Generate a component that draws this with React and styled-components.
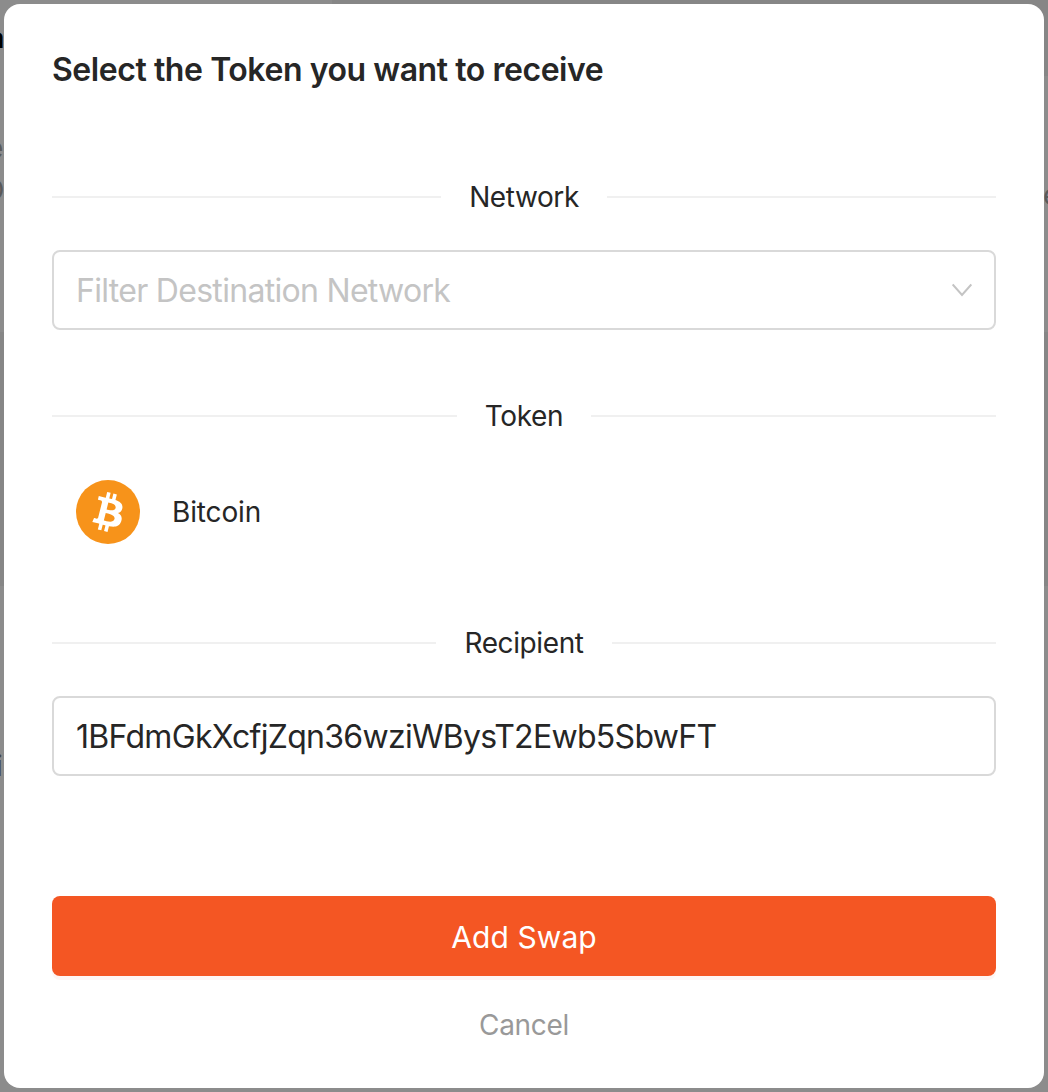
import React from "react";
import styled, { createGlobalStyle } from "styled-components";

const GlobalStyle = createGlobalStyle`
  html, body {
    margin: 0;
    padding: 0;
    background: #8c8c8c;
  }
  * {
    box-sizing: border-box;
  }
`;

const SwapModal = () => {
  return (
    <Backdrop>
      <GlobalStyle />
      <PagePanel $left={332} $top={0} $width={716} $height={76} />
      <PagePanel $left={0} $top={332} $width={1048} $height={254} />
      <PeekText $left={-12} $top={21} $color="#000" $weight={700}>a</PeekText>
      <PeekText $left={-13} $top={131} $color="#5a5a5a">e</PeekText>
      <PeekText $left={-17} $top={173} $color="#5a5a5a">O</PeekText>
      <PeekText $left={1043} $top={178} $color="#5a5a5a">e</PeekText>
      <PeekText $left={-4} $top={749} $color="#444">i</PeekText>
      <Modal>
        <Title>Select the Token you want to receive</Title>

        <Divider>Network</Divider>
        <Field>
          <Placeholder>Filter Destination Network</Placeholder>
          <svg width="20" height="14" viewBox="0 0 20 14" fill="none">
            <path d="M0.7 1.5 L10 12 L19.3 1.5" stroke="#c4c4c4" strokeWidth="2" />
          </svg>
        </Field>

        <Divider $top={66}>Token</Divider>
        <TokenRow>
          <svg width="64" height="64" viewBox="0 0 32 32">
            <circle cx="16" cy="16" r="16" fill="#f7931a" />
            <path
              fill="#fff"
              d="M23.189 14.02c.314-2.096-1.283-3.223-3.465-3.975l.708-2.84-1.728-.43-.69 2.765c-.454-.114-.92-.22-1.385-.326l.695-2.783L15.596 6l-.708 2.839c-.376-.086-.746-.17-1.104-.26l.002-.009-2.384-.595-.46 1.846s1.283.294 1.256.312c.7.175.826.638.805 1.006l-.806 3.235c.048.012.11.03.18.057l-.183-.045-1.13 4.532c-.086.212-.303.531-.793.41.018.025-1.256-.313-1.256-.313l-.858 1.978 2.25.561c.418.105.828.215 1.231.318l-.715 2.872 1.727.43.708-2.84c.472.127.93.245 1.378.357l-.706 2.828 1.728.43.715-2.866c2.948.558 5.164.333 6.097-2.333.752-2.146-.037-3.385-1.588-4.192 1.13-.26 1.98-1.003 2.207-2.538zm-3.95 5.538c-.533 2.147-4.148.986-5.32.695l.95-3.805c1.172.293 4.929.872 4.37 3.11zm.535-5.569c-.487 1.953-3.495.96-4.47.717l.86-3.45c.975.243 4.118.696 3.61 2.733z"
            />
          </svg>
          <TokenName>Bitcoin</TokenName>
        </TokenRow>

        <Divider $top={79}>Recipient</Divider>
        <Field>
          <Value>1BFdmGkXcfjZqn36wziWBysT2Ewb5SbwFT</Value>
        </Field>

        <PrimaryButton>Add Swap</PrimaryButton>
        <CancelButton>Cancel</CancelButton>
      </Modal>
    </Backdrop>
  );
};

export default SwapModal;

const Backdrop = styled.div`
  position: relative;
  width: 1048px;
  height: 1092px;
  padding: 4px;
  overflow: hidden;
  background: #8c8c8c;
  font-family: Inter, "Liberation Sans", sans-serif;
`;

const PagePanel = styled.div`
  position: absolute;
  left: ${({ $left }) => $left}px;
  top: ${({ $top }) => $top}px;
  width: ${({ $width }) => $width}px;
  height: ${({ $height }) => $height}px;
  background: #868686;
`;

const PeekText = styled.span`
  position: absolute;
  left: ${({ $left }) => $left}px;
  top: ${({ $top }) => $top}px;
  font-size: 28px;
  line-height: 34px;
  font-weight: ${({ $weight }) => $weight || 400};
  color: ${({ $color }) => $color};
`;

const Modal = styled.div`
  position: relative;
  width: 1040px;
  height: 1084px;
  padding: 45px 48px 0;
  display: flex;
  flex-direction: column;
  background: #fff;
  border-radius: 16px;
`;

const Title = styled.h2`
  margin: 0;
  height: 42px;
  font-size: 32px;
  line-height: 42px;
  font-weight: 600;
  letter-spacing: -0.44px;
  color: #262626;
`;

const Divider = styled.div`
  margin-top: ${({ $top }) => $top || 86}px;
  display: flex;
  align-items: center;
  gap: 28px;
  height: 40px;
  font-size: 28px;
  line-height: 40px;
  letter-spacing: -0.4px;
  color: #262626;
  white-space: nowrap;

  &::before,
  &::after {
    content: "";
    flex: 1;
    height: 2px;
    background: #f0f0f0;
  }
`;

const Field = styled.div`
  margin-top: 33px;
  height: 80px;
  padding: 0 22px;
  display: flex;
  align-items: center;
  justify-content: space-between;
  border: 2px solid #d9d9d9;
  border-radius: 8px;
  font-size: 32px;
  letter-spacing: -0.7px;
`;

const Placeholder = styled.span`
  color: #c4c4c4;
`;

const Value = styled.span`
  color: #262626;
`;

const TokenRow = styled.div`
  margin-top: 44px;
  padding-left: 24px;
  height: 64px;
  display: flex;
  align-items: center;
  gap: 32px;
`;

const TokenName = styled.span`
  font-size: 28px;
  letter-spacing: -0.15px;
  color: #262626;
`;

const PrimaryButton = styled.button`
  margin-top: 120px;
  height: 80px;
  padding: 2px 0 0;
  border: 0;
  border-radius: 8px;
  background: #f45623;
  box-shadow: 0 4px 0 rgba(244, 86, 35, 0.05);
  color: #fff;
  font-family: inherit;
  font-size: 30px;
  letter-spacing: 0.1px;
`;

const CancelButton = styled.button`
  margin-top: 28px;
  height: 40px;
  border: 0;
  background: none;
  color: #999;
  font-family: inherit;
  font-size: 28px;
  line-height: 40px;
  letter-spacing: -0.3px;
`;
